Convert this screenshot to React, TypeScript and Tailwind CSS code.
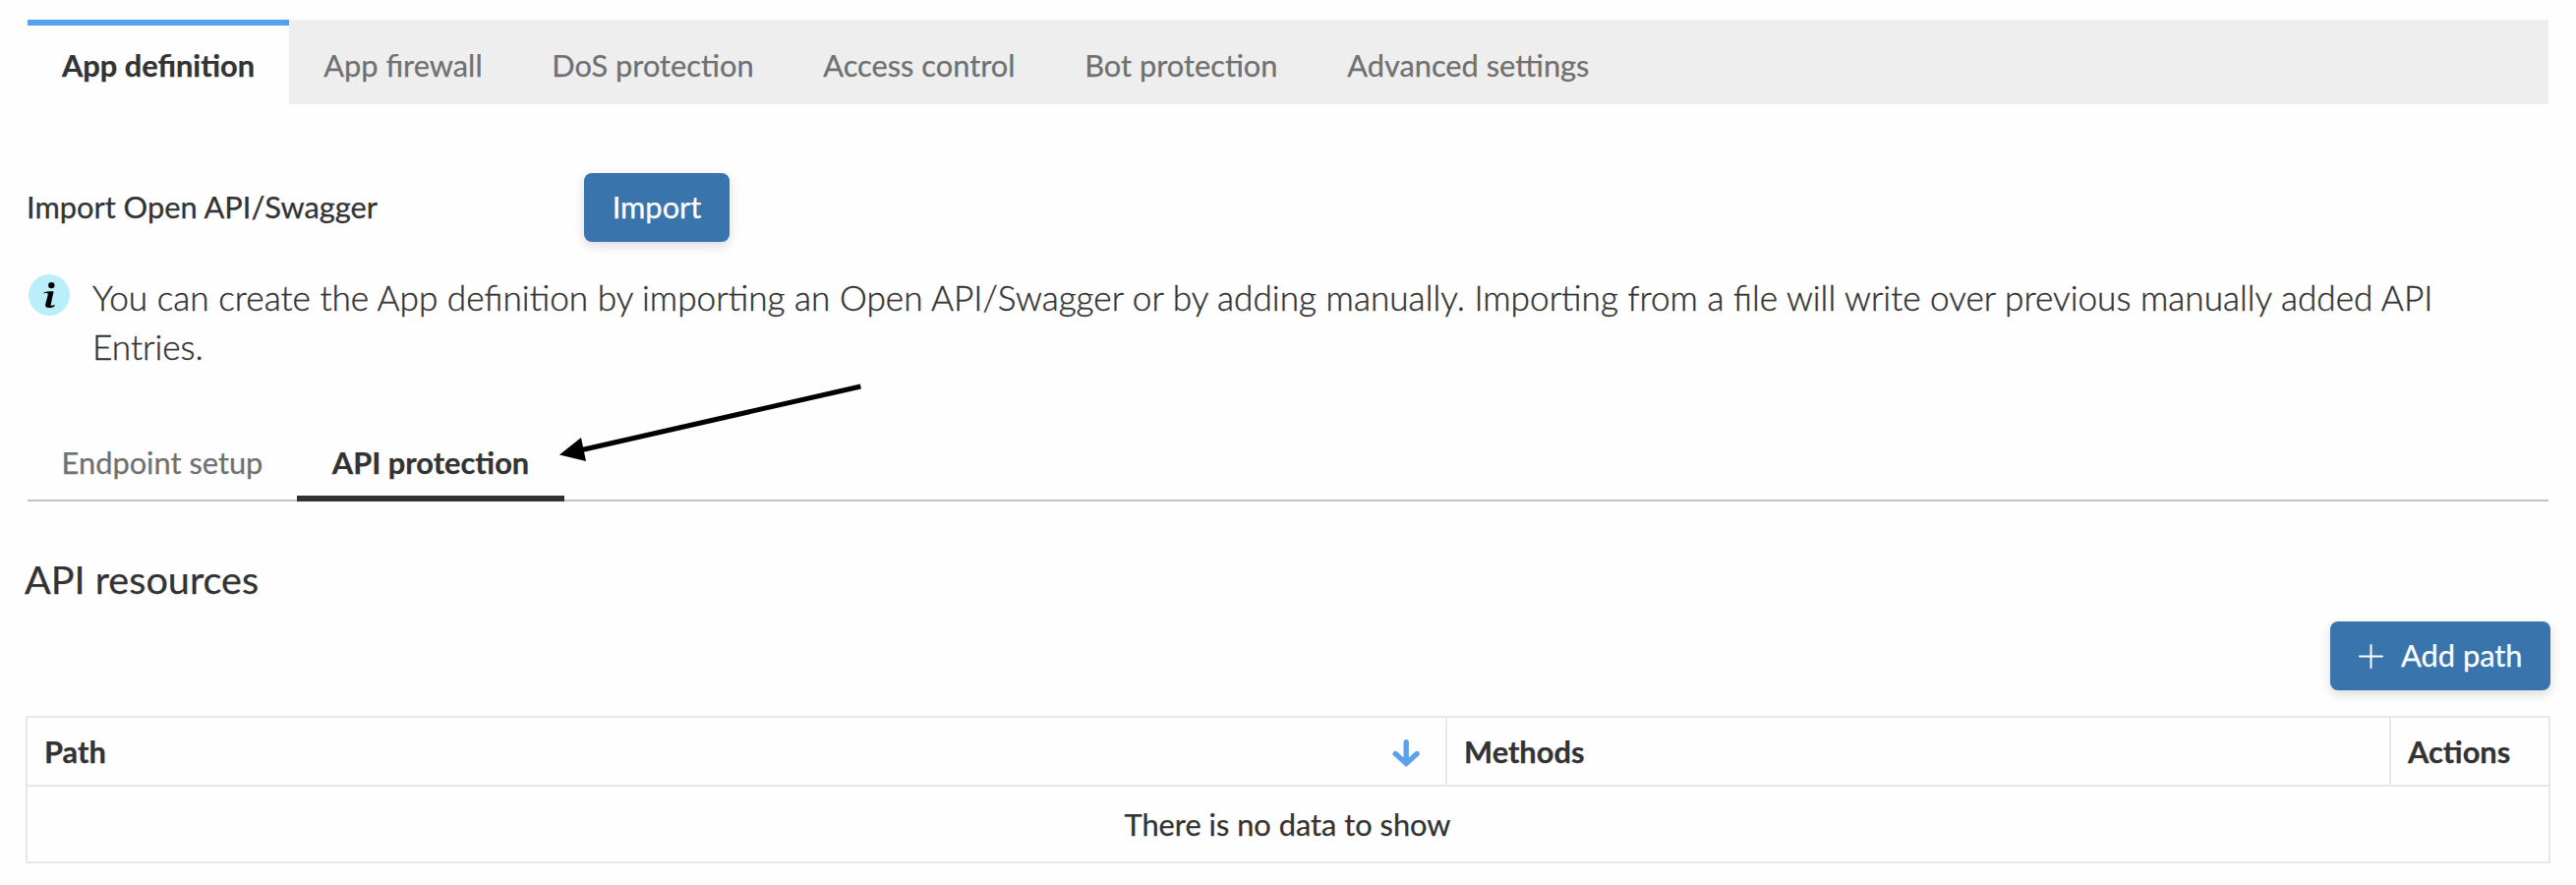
const tabs = ["App definition", "App firewall", "DoS protection", "Access control", "Bot protection", "Advanced settings"];

function TabBar() {
  return (
    <nav className="mx-7 flex h-[86px] bg-[#eeeeee]">
      {tabs.map((tab, i) => (
        <button
          key={tab}
          className={
            i === 0
              ? "w-[266px] border-t-[6px] border-[#58a1ee] bg-[#fefefe] pt-[2px] font-bold text-[#333333]"
              : "px-[35.3px] pt-[8px] text-[#707070]"
          }
        >
          {tab}
        </button>
      ))}
    </nav>
  );
}

function InfoIcon() {
  return (
    <svg className="mt-[1px] h-[42px] w-[42px] shrink-0" viewBox="0 0 42 42">
      <circle cx="21" cy="21" r="21" fill="#baeef8" />
      <circle cx="23.3" cy="11.1" r="3.2" fill="#000" />
      <path
        d="M15.5 18.6 C18 17.3 22 17 25.6 17.2 L22.6 31 C22.5 32.3 24.4 32 26.6 30.7 L26.4 32.4 C23.5 34.4 17.2 35.2 17.2 31.6 C17.2 29 19.8 22.4 19.7 20.2 C19.6 18.8 17.5 18.9 15.5 19.4 Z"
        fill="#000"
      />
    </svg>
  );
}

export default function App() {
  return (
    <div className="relative h-[900px] w-[2620px] overflow-hidden bg-[#fefefe] pt-5 font-['Lato',sans-serif] text-[30.8px] leading-[40px] text-[#333333] [-webkit-text-stroke-width:0.25px]">
      <TabBar />
      <div className="mt-[70px] flex h-[70px] items-center pl-[27px]">
        <span className="w-[567px]">Import Open API/Swagger</span>
        <button className="h-[70px] w-[148px] rounded-[8px] bg-[#3974ac] text-white shadow-[0_4px_12px_rgba(0,0,0,0.14)]">
          Import
        </button>
      </div>
      <div className="mt-8 flex h-[100px] gap-[23px] pl-[29px]">
        <InfoIcon />
        <p className="-mt-px w-[2420px] text-[35.2px] font-light leading-[50px] [-webkit-text-stroke-width:0.4px]">
          You can create the App definition by importing an Open API/Swagger or by adding manually. Importing from a
          file will write over previous manually added API Entries.
        </p>
      </div>
      <div className="mx-7 mt-[54px] flex h-[78px] border-b-2 border-[#c4c4c4]">
        <button className="h-[78px] w-[274px] text-[#707070]">Endpoint setup</button>
        <button className="h-[78px] w-[272px] border-b-[6px] border-[#333333] pt-[6px] font-bold">API protection</button>
      </div>
      <h2 className="mt-[53px] pl-[25px] text-[39.6px] leading-[52px]">API resources</h2>
      <div className="mt-[17px] flex justify-end pr-[26px]">
        <button className="flex h-[70px] w-[224px] items-center rounded-[8px] bg-[#3974ac] pl-[29px] text-white shadow-[0_4px_12px_rgba(0,0,0,0.14)]">
          <svg
            className="mt-px mr-[18px] h-[25px] w-[25px]"
            viewBox="0 0 25 25"
            stroke="#fff"
            strokeWidth="2"
            strokeLinecap="round"
          >
            <path d="M12.5 1V24M1 12.5H24" />
          </svg>
          Add path
        </button>
      </div>
      <div className="mx-[26px] mt-[26px] h-[150px] border-2 border-[#e8e8e8]">
        <div className="flex h-[70px] border-b-2 border-[#e8e8e8] font-bold">
          <div className="flex w-[1444px] items-center justify-between border-r-2 border-[#e8e8e8] pl-[17px] pr-[26px]">
            <span className="pt-[2px]">Path</span>
            <svg
              className="mt-1 h-[30px] w-[28px]"
              viewBox="0 0 28 30"
              fill="none"
              stroke="#5ba2ea"
              strokeWidth="5.4"
              strokeLinecap="round"
            >
              <path d="M14.2 3.7V23M3.3 15.6L14.2 25.4L25.1 15.6" />
            </svg>
          </div>
          <div className="flex w-[960px] items-center border-r-2 border-[#e8e8e8] pl-[17px] pt-[2px]">Methods</div>
          <div className="flex items-center pl-[17px] pt-[2px]">Actions</div>
        </div>
        <div className="flex h-[76px] items-center justify-center pt-[2px] pr-px">There is no data to show</div>
      </div>
      <svg className="absolute left-[560px] top-[380px] h-[100px] w-[330px]" viewBox="560 380 330 100">
        <path d="M875.4 393L592 457.5" stroke="#000" strokeWidth="5" />
        <path d="M569 462.5L591 445L596 469Z" fill="#000" />
      </svg>
    </div>
  );
}
